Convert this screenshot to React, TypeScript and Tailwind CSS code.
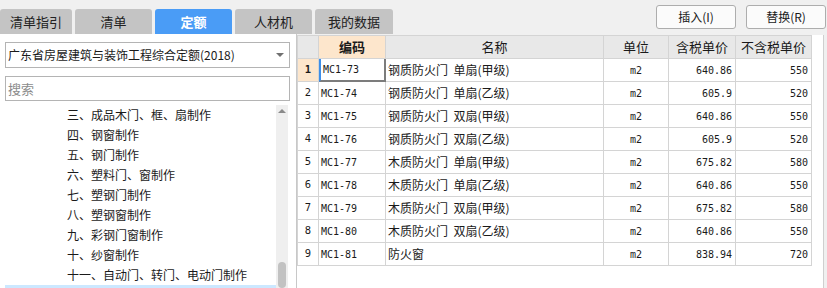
import React from "react";

const CJK = "font-['Noto_Sans_CJK_SC','Noto_Sans',sans-serif]";
const MONO = "font-['DejaVu_Sans_Mono','Liberation_Mono',monospace]";

const TABS = [
  { label: "清单指引", w: "w-[72px]" },
  { label: "清单", w: "w-[77px]" },
  { label: "定额", w: "w-[77px]", active: true },
  { label: "人材机", w: "w-[77px]" },
  { label: "我的数据", w: "w-[78px]" },
];

const TREE = [
  "三、成品木门、框、扇制作",
  "四、钢窗制作",
  "五、钢门制作",
  "六、塑料门、窗制作",
  "七、塑钢门制作",
  "八、塑钢窗制作",
  "九、彩钢门窗制作",
  "十、纱窗制作",
  "十一、自动门、转门、电动门制作",
];

const ROWS = [
  { code: "MC1-73", name: "钢质防火门  单扇(甲级)", unit: "m2", tax: "640.86", net: "550" },
  { code: "MC1-74", name: "钢质防火门  单扇(乙级)", unit: "m2", tax: "605.9", net: "520" },
  { code: "MC1-75", name: "钢质防火门  双扇(甲级)", unit: "m2", tax: "640.86", net: "550" },
  { code: "MC1-76", name: "钢质防火门  双扇(乙级)", unit: "m2", tax: "605.9", net: "520" },
  { code: "MC1-77", name: "木质防火门  单扇(甲级)", unit: "m2", tax: "675.82", net: "580" },
  { code: "MC1-78", name: "木质防火门  单扇(乙级)", unit: "m2", tax: "640.86", net: "550" },
  { code: "MC1-79", name: "木质防火门  双扇(甲级)", unit: "m2", tax: "675.82", net: "580" },
  { code: "MC1-80", name: "木质防火门  双扇(乙级)", unit: "m2", tax: "640.86", net: "550" },
  { code: "MC1-81", name: "防火窗", unit: "m2", tax: "838.94", net: "720" },
];

const GRID = "grid grid-cols-[21px_67px_218px_65px_67px_76px]";
const CELL = "h-[23px] border-r border-b border-[#d4d4d4] flex items-center";

export default function App() {
  return (
    <div className={`w-[827px] h-[288px] overflow-hidden bg-[#f0f0f0] text-[12px] text-[#1a1a1a] ${CJK}`}>
      {/* top bar: tabs + buttons */}
      <div className="flex h-[34px]">
        <div className="flex items-end gap-[3px] pt-[9px]">
          {TABS.map((t) => (
            <div
              key={t.label}
              className={`${t.w} h-[25px] rounded-t-[3px] flex items-center justify-center text-[13px] ${
                t.active ? "bg-[#4a9cf6] text-white font-bold" : "bg-[#c4c4c4] text-[#222]"
              }`}
            >
              {t.label}
            </div>
          ))}
        </div>
        <div className="ml-auto flex gap-[10px] pt-[5px] pr-[1px]">
          <button className="w-[80px] h-[24px] rounded-[3px] border border-[#adadad] bg-[#fbfbfb] text-[12px]">
            插入(I)
          </button>
          <button className="w-[80px] h-[24px] rounded-[3px] border border-[#adadad] bg-[#fbfbfb] text-[12px]">
            替换(R)
          </button>
        </div>
      </div>

      <div className="flex h-[254px]">
        {/* left panel */}
        <div className="w-[296px] bg-white pl-[5px] pt-[8px] flex flex-col">
          <div className="w-[285px] h-[26px] shrink-0 border border-[#b4b4b4] flex items-center pl-[2px] pr-[5px]">
            <span className="text-[12px]">广东省房屋建筑与装饰工程综合定额(2018)</span>
            <span className="ml-auto w-0 h-0 border-l-[4px] border-r-[4px] border-t-[4px] border-l-transparent border-r-transparent border-t-[#707070]" />
          </div>
          <div className="mt-[8px] w-[285px] h-[25px] shrink-0 border border-[#b4b4b4] flex items-center pl-[2px] text-[#8c8c8c] text-[13px]">
            搜索
          </div>
          <div className="mt-[4px] flex flex-1 min-h-0 overflow-hidden">
            <div className="w-[271px] flex flex-col">
              {TREE.map((t) => (
                <div key={t} className="h-[20px] shrink-0 flex items-center pl-[62px] text-[12px]">
                  {t}
                </div>
              ))}
              <div className="h-[20px] shrink-0 bg-[#cce8ff]" />
            </div>
            <div className="w-[12px] bg-[#efefef] flex flex-col items-center">
              <span className="mt-[4px] w-0 h-0 border-l-[4px] border-r-[4px] border-b-[4px] border-l-transparent border-r-transparent border-b-[#8a8a8a]" />
              <div className="mt-[149px] w-[8px] h-[40px] rounded-full bg-[#c2c2c2]" />
            </div>
          </div>
        </div>
        <div className="w-px bg-[#c8c8c8]" />

        {/* right panel */}
        <div className="w-[527px] mt-[1px] bg-white border-r border-[#cfcfcf]">
          <div className={`${GRID} w-[515px] border-l border-t border-[#d4d4d4]`}>
            <div className={`${CELL} bg-[#e8e8e8]`} />
            <div className={`${CELL} bg-[#fde6cc] justify-center font-bold text-[13px]`}>编码</div>
            <div className={`${CELL} bg-[#e8e8e8] justify-center text-[13px]`}>名称</div>
            <div className={`${CELL} bg-[#e8e8e8] justify-center text-[13px]`}>单位</div>
            <div className={`${CELL} bg-[#e8e8e8] justify-center text-[13px]`}>含税单价</div>
            <div className={`${CELL} bg-[#e8e8e8] justify-center text-[13px]`}>不含税单价</div>
            {ROWS.map((r, i) => (
              <React.Fragment key={r.code}>
                <div
                  className={`${CELL} justify-center ${MONO} text-[10.5px] ${
                    i === 0 ? "bg-[#fde6cc] font-bold" : ""
                  }`}
                >
                  {i + 1}
                </div>
                <div
                  className={`${CELL} pl-[2px] ${MONO} text-[10px] ${
                    i === 0 ? "border-l-2 border-l-[#3d8ee8] border-r-2 border-r-[#7c7c7c] border-b-2 border-b-[#7c7c7c]" : ""
                  }`}
                >
                  {r.code}
                </div>
                <div className={`${CELL} pl-[2px] text-[12px] whitespace-pre`}>{r.name}</div>
                <div className={`${CELL} justify-center ${MONO} text-[10px]`}>{r.unit}</div>
                <div className={`${CELL} justify-end pr-[3px] ${MONO} text-[10px]`}>{r.tax}</div>
                <div className={`${CELL} justify-end pr-[3px] ${MONO} text-[10px]`}>{r.net}</div>
              </React.Fragment>
            ))}
          </div>
        </div>
      </div>
    </div>
  );
}
